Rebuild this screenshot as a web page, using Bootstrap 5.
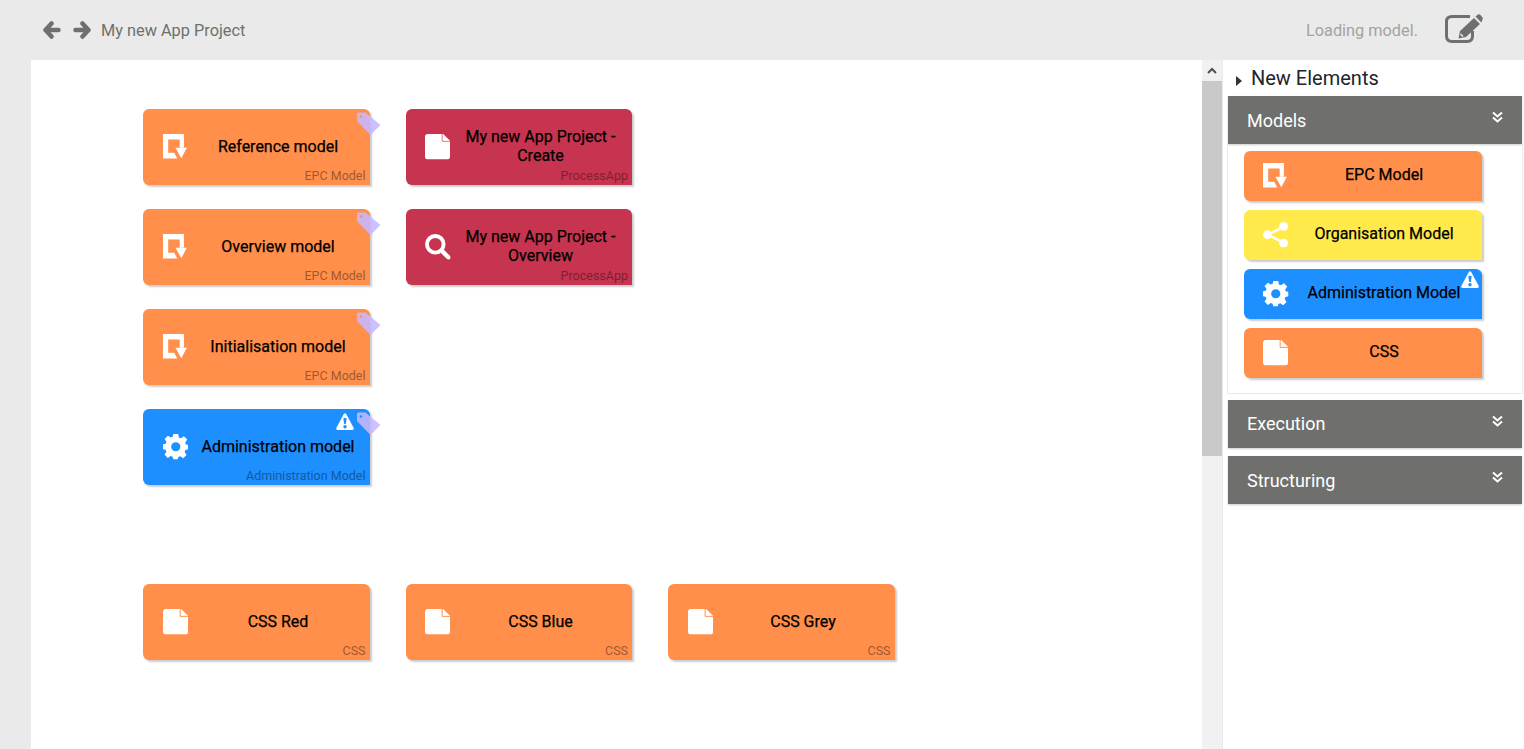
<!DOCTYPE html>
<html lang="en"><head><meta charset="utf-8"><title>My new App Project</title>
<link rel="stylesheet" href="https://cdn.jsdelivr.net/npm/bootstrap@5.3.0/dist/css/bootstrap.min.css">
<style>
html,body{height:100%;overflow:hidden}
body{background:#eaeaea;font-family:Roboto,sans-serif;color:#212529}
.topbar{height:60px;padding:0 41px 0 43px}
.nav-ic{width:18px;height:18px;margin-right:12px}
.crumb{font-size:16.32px;color:#6f706d;margin-left:-2px;padding-top:2px}
.status{font-size:16.32px;color:#a3a3a3;margin-right:27px;padding-top:2px}
.edit-ic{margin-bottom:3px}
.main-area{height:689px}
.canvas-pane{margin-left:31px;width:1171px;padding:49px 0 0 112px;background:#fff}
.group-gap{margin-top:99px}
.node-row{display:flex;gap:36px;margin-bottom:24px;height:76px}
.node{position:relative;border-radius:6px 6px 0 6px;box-shadow:2px 2px 2px #ccc;color:#000;font-weight:400;-webkit-text-stroke:.25px #000;display:flex;align-items:center;text-align:center;line-height:19px;flex:none}
.node-lg{width:226.500px;height:76px}
.node-sm{width:238px;height:50px}
.node-ic{position:absolute;width:25.500px;height:25.500px}
.node-lg .node-ic{top:25px;left:19.500px}
.node-sm .node-ic{top:12px;left:19px}
.node-txt{font-size:16px;width:100%}
.node-lg .node-txt{padding:0 9.500px 0 53px;margin-top:-2px}
.node-sm .node-txt{padding:0 18px 0 60px;margin-top:-3px;white-space:nowrap}
.kind{position:absolute;right:4px;bottom:1px;font-size:12.500px;font-weight:400;-webkit-text-stroke:0;line-height:16px;color:#000;opacity:.38}
.warn{position:absolute;width:18px;height:17px}
.node-lg .warn{right:16px;top:4px}
.node-sm .warn{right:3px;top:2px}
.tag{position:absolute;width:26px;height:24px;right:-12px;top:3px}
.c-orange{background:#ff8f4b;--bg:#ff8f4b}
.c-red{background:#c7344f;--bg:#e0708a}
.c-blue{background:#1e8fff;--bg:#1e8fff}
.c-yellow{background:#ffe94b;--bg:#ffe94b}
.vscroll{width:20px;background:#f1f1f1;flex:none}
.vs-up{height:21px;display:flex;align-items:center;justify-content:center}
.vs-thumb{height:375px;background:#c8c8c8}
.side-pane{width:302px;background:#fff;border-left:1px solid #eaeaea;flex:none;padding-left:4px}
.side-title{height:36px;font-size:20px;line-height:36px;padding-left:28px;position:relative;margin-left:-4px}
.side-title::before{content:"";position:absolute;left:13px;top:16px;border-left:6px solid #333;border-top:5px solid transparent;border-bottom:5px solid transparent}
.acc-head{height:48px;width:294px;margin-left:1px;background:#6f706d;color:#fff;font-size:18px;line-height:49px;padding-left:19px;box-shadow:0 1px 2px #ccc;position:relative}
.acc-ic{position:absolute;right:18px;top:15px;width:13px;height:13px}
.acc-body{width:296px;height:250px;border:1px solid #eaeaea;border-top:0;padding:7px 0 0 16px;margin-bottom:6px;display:flex;flex-direction:column;gap:9px}
.acc-next{margin-bottom:8px;line-height:47px}
</style></head><body>
<svg width="0" height="0" class="d-block" style="position:absolute"><defs>
<symbol id="i-epc" viewBox="0 0 26 26"><path fill="#fff" d="M0 0H21.300V14H17V5.700H5.300V19H11.500L14.500 25H0Z"/><path fill="#fff" d="M12.700 14H24.300L18.700 24.600Z"/></symbol>
<symbol id="i-doc" viewBox="0 0 26 26"><path fill="#fff" d="M3 0H18.500L25.500 7V23Q25.500 26 22.500 26H3Q0 26 0 23V3Q0 0 3 0Z"/><path d="M17.500 0V7.500H25.500" fill="none" style="stroke:var(--bg)" stroke-width="1"/></symbol>
<symbol id="i-search" viewBox="0 0 26 26"><circle cx="10.500" cy="10.500" r="8.500" fill="none" stroke="#fff" stroke-width="4"/><path d="M17 17 24 24" stroke="#fff" stroke-width="4.500" stroke-linecap="round"/></symbol>
<symbol id="i-gear" viewBox="0 0 26 26"><path fill="#fff" fill-rule="evenodd" d="M10.500 0H15.500L16.200 3.600 18.200 4.400 21.300 2.300 24.700 5.700 22.600 8.800 23.400 10.800 26 11V15.500L22.900 16.200 22 18.200 24 21.300 20.600 24.700 17.600 22.600 15.600 23.400 15 26H10.500L9.800 23.300 7.800 22.500 4.900 24.500 1.500 21 3.500 18.100 2.700 16 0 15.500V10.500L2.800 9.900 3.600 8 1.600 5 5 1.700 8 3.600 9.900 2.800ZM13 8.300A4.700 4.700 0 1 0 13 17.700 4.700 4.700 0 1 0 13 8.300Z"/></symbol>
<symbol id="i-share" viewBox="0 0 26 26"><path d="M21 5 5 13 21 21" fill="none" stroke="#fff" stroke-width="2.500"/><circle cx="21" cy="4.500" r="4.500" fill="#fff"/><circle cx="4.500" cy="13" r="4.500" fill="#fff"/><circle cx="21" cy="21.500" r="4.500" fill="#fff"/></symbol>
<symbol id="i-warn" viewBox="0 0 18 17"><path fill="#fff" fill-rule="evenodd" d="M7.800 1Q9 -.5 10.200 1L17.700 15Q18.300 16.800 16.500 17H1.500Q-.3 16.800 .3 15ZM7.300 5.500 8.200 11H9.800L10.700 5.500Q9 4 7.300 5.500ZM9 12A1.700 1.700 0 1 0 9 15.400 1.700 1.700 0 1 0 9 12Z"/></symbol>
<symbol id="i-tag" viewBox="0 0 26 24"><path fill="#c6b8ff" fill-opacity=".88" fill-rule="evenodd" d="M1 2Q1 .5 2.500 .5H9.500L24.500 13 14.500 23 1 9ZM5 3.200A1.300 1.300 0 1 0 5 5.800 1.300 1.300 0 1 0 5 3.200Z"/></symbol>
<symbol id="i-chev" viewBox="0 0 13 13"><path d="M2 1.500 6.500 5.500 11 1.500M2 6.500 6.500 10.500 11 6.500" fill="none" stroke="#fff" stroke-width="2"/></symbol>
</defs></svg>

<header class="topbar d-flex align-items-center">
  <svg class="nav-ic" viewBox="0 0 18 18"><path d="M8.500 2.500 2.500 9 8.500 15.500M3.500 9H15.500" fill="none" stroke="#6f706d" stroke-width="4.500" stroke-linecap="round" stroke-linejoin="round"/></svg>
  <svg class="nav-ic" viewBox="0 0 18 18"><path d="M9.500 2.500 15.500 9 9.500 15.500M14.500 9H2.500" fill="none" stroke="#6f706d" stroke-width="4.500" stroke-linecap="round" stroke-linejoin="round"/></svg>
  <span class="crumb">My new App Project</span>
  <span class="status ms-auto">Loading model.</span>
  <svg class="edit-ic" width="38" height="29" viewBox="0 0 38 29"><path d="M25 2.500H7Q1.500 2.500 1.500 7.500V22Q1.500 27.500 7 27.500H22Q27.500 27.500 27.500 22V17" fill="none" stroke="#6f706d" stroke-width="3"/><path d="M13.500 24.500 15 17 29 4 35 10 21 23ZM30.500 2.500 33 .500Q34 0 35 .500L37.500 3.500Q38 4.500 37.500 5.500L36.300 8.500Z" fill="#6f706d"/><path d="M15.500 20 18 22.500" stroke="#eaeaea" stroke-width="1.500"/></svg>
</header>

<div class="main-area d-flex">
  <main class="canvas-pane overflow-hidden">
    <div class="node-row">
      <div class="node node-lg c-orange"><svg class="node-ic"><use href="#i-epc"/></svg><div class="node-txt">Reference model</div><span class="kind">EPC Model</span><svg class="tag"><use href="#i-tag"/></svg></div>
      <div class="node node-lg c-red"><svg class="node-ic"><use href="#i-doc"/></svg><div class="node-txt">My new App Project - Create</div><span class="kind">ProcessApp</span></div>
    </div>
    <div class="node-row">
      <div class="node node-lg c-orange"><svg class="node-ic"><use href="#i-epc"/></svg><div class="node-txt">Overview model</div><span class="kind">EPC Model</span><svg class="tag"><use href="#i-tag"/></svg></div>
      <div class="node node-lg c-red"><svg class="node-ic"><use href="#i-search"/></svg><div class="node-txt">My new App Project - Overview</div><span class="kind">ProcessApp</span></div>
    </div>
    <div class="node-row">
      <div class="node node-lg c-orange"><svg class="node-ic"><use href="#i-epc"/></svg><div class="node-txt">Initialisation model</div><span class="kind">EPC Model</span><svg class="tag"><use href="#i-tag"/></svg></div>
    </div>
    <div class="node-row">
      <div class="node node-lg c-blue"><svg class="node-ic"><use href="#i-gear"/></svg><div class="node-txt">Administration model</div><span class="kind">Administration Model</span><svg class="warn"><use href="#i-warn"/></svg><svg class="tag"><use href="#i-tag"/></svg></div>
    </div>
    <div class="node-row group-gap">
      <div class="node node-lg c-orange"><svg class="node-ic"><use href="#i-doc"/></svg><div class="node-txt">CSS Red</div><span class="kind">CSS</span></div>
      <div class="node node-lg c-orange"><svg class="node-ic"><use href="#i-doc"/></svg><div class="node-txt">CSS Blue</div><span class="kind">CSS</span></div>
      <div class="node node-lg c-orange"><svg class="node-ic"><use href="#i-doc"/></svg><div class="node-txt">CSS Grey</div><span class="kind">CSS</span></div>
    </div>
  </main>
  <div class="vscroll">
    <div class="vs-up"><svg width="10" height="7" viewBox="0 0 10 7"><path d="M1 6 5 2 9 6" fill="none" stroke="#505050" stroke-width="2"/></svg></div>
    <div class="vs-thumb"></div>
  </div>
  <aside class="side-pane">
    <div class="side-title">New Elements</div>
    <div class="acc-head">Models<svg class="acc-ic"><use href="#i-chev"/></svg></div>
    <div class="acc-body">
      <div class="node node-sm c-orange"><svg class="node-ic"><use href="#i-epc"/></svg><div class="node-txt">EPC Model</div></div>
      <div class="node node-sm c-yellow"><svg class="node-ic"><use href="#i-share"/></svg><div class="node-txt">Organisation Model</div></div>
      <div class="node node-sm c-blue"><svg class="node-ic"><use href="#i-gear"/></svg><div class="node-txt">Administration Model</div><svg class="warn"><use href="#i-warn"/></svg></div>
      <div class="node node-sm c-orange"><svg class="node-ic"><use href="#i-doc"/></svg><div class="node-txt">CSS</div></div>
    </div>
    <div class="acc-head acc-next">Execution<svg class="acc-ic"><use href="#i-chev"/></svg></div>
    <div class="acc-head">Structuring<svg class="acc-ic"><use href="#i-chev"/></svg></div>
  </aside>
</div>
<script src="https://cdn.jsdelivr.net/npm/bootstrap@5.3.0/dist/js/bootstrap.bundle.min.js"></script>
</body></html>
